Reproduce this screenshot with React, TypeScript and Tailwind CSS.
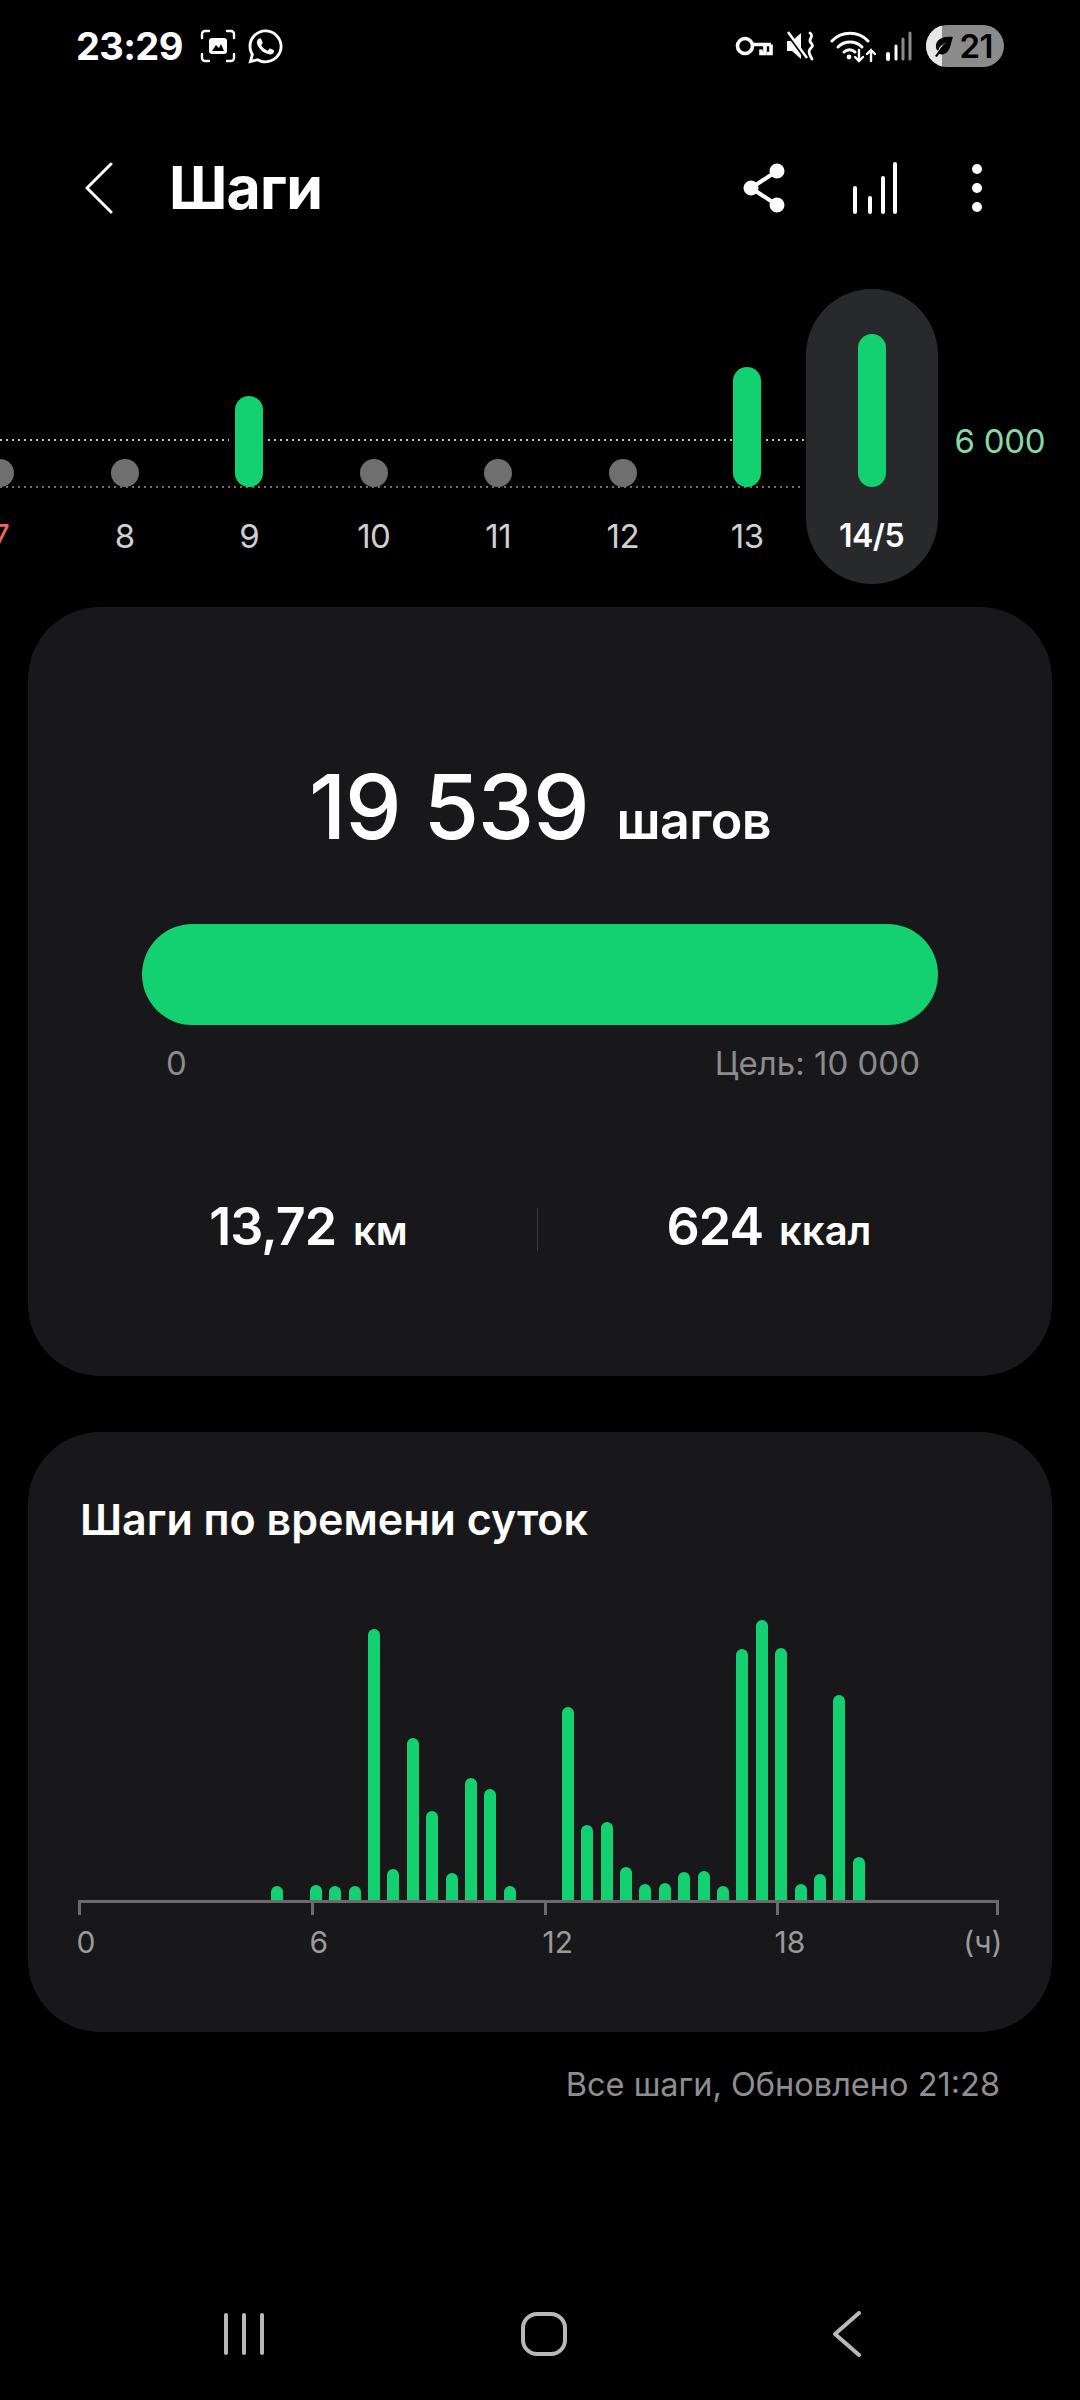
import { FaWhatsapp } from 'react-icons/fa';

// steps per half hour slot, height in px (slot index from first bar at ~5:00)
const hourly = [14, 0, 15, 14, 14, 271, 31, 162, 89, 27, 122, 111, 14, 0, 0, 193, 75, 78, 33, 16, 17, 28, 29, 14, 251, 280, 252, 16, 26, 205, 43];

const days = [
  { label: '7', h: 28, red: true },
  { label: '8', h: 28 },
  { label: '9', h: 91 },
  { label: '10', h: 28 },
  { label: '11', h: 28 },
  { label: '12', h: 28 },
  { label: '13', h: 120 },
];

const axis = [
  { label: '0', w: 'w-[233px]' },
  { label: '6', w: 'w-[233px]' },
  { label: '12', w: 'w-[232px]' },
  { label: '18', w: 'w-[223px]' },
];

function StatusBar() {
  return (
    <div className="h-[92px] pl-[76px] pr-[76px] pt-[25px] flex items-start justify-between text-white">
      <div className="flex items-center h-[42px]">
        <span className="text-[38px] leading-[42px] font-bold tracking-[-0.6px]">23:29</span>
        <svg className="ml-[17px]" width="36" height="34" viewBox="0 0 36 34" fill="none" stroke="white" strokeWidth="2.4" strokeLinecap="round">
          <path d="M2 9V5a3 3 0 0 1 3-3h4M27 2h4a3 3 0 0 1 3 3v4M34 25v4a3 3 0 0 1-3 3h-4M9 32H5a3 3 0 0 1-3-3v-4" />
          <rect x="9" y="9" width="18" height="16" rx="3" fill="white" stroke="none" />
          <path d="M12 22l4-6 3 3 2-4 3 7z" fill="black" stroke="none" />
        </svg>
        <FaWhatsapp className="ml-[10px]" size={39} color="white" />
      </div>
      <div className="flex items-center h-[42px]">
        <svg width="38" height="22" viewBox="0 0 38 22" fill="none" stroke="white" strokeWidth="3.6">
          <circle cx="10" cy="11" r="7.5" />
          <path d="M17 9.5h19M30 9.5v9h-4v-4M36 9.5v9h-4" strokeLinejoin="miter" />
        </svg>
        <svg className="ml-[13px]" width="31" height="30" viewBox="0 0 31 30" fill="none">
          <path d="M1 10h5l9-8v26l-9-8H1z" fill="white" />
          <path d="M1 2l19 26" stroke="black" strokeWidth="3" />
          <path d="M2 1l19 26" stroke="white" strokeWidth="2.5" />
          <path d="M24 2c5 4-3 6 1 10 3 3 1 4-1 6s-1 5 2 10" stroke="white" strokeWidth="2.8" strokeLinecap="round" />
        </svg>
        <svg className="ml-[13px]" width="46" height="33" viewBox="0 0 46 33" fill="none" stroke="white" strokeLinecap="round">
          <path d="M2 11a25 25 0 0 1 36 0" strokeWidth="3" />
          <path d="M8 17a17 17 0 0 1 24 0" strokeWidth="3" />
          <path d="M14 22a8 8 0 0 1 11 0" strokeWidth="3" />
          <circle cx="19" cy="27" r="2.4" fill="white" stroke="none" />
          <path d="M29 20v11M25 27l4 4 4-4" strokeWidth="2.4" />
          <path d="M41 31V20M37 24l4-4 4 4" strokeWidth="2.4" />
        </svg>
        <svg className="ml-[9px]" width="28" height="30" viewBox="0 0 28 30" fill="none" strokeLinecap="round">
          <path d="M3 23v5" stroke="white" strokeWidth="4" />
          <path d="M11 15v13" stroke="white" strokeWidth="3" />
          <path d="M18 8v20" stroke="#8a8a8a" strokeWidth="3" />
          <path d="M25 2v26" stroke="#8a8a8a" strokeWidth="3" />
        </svg>
        <div className="ml-[13px] relative w-[78px] h-[42px] rounded-full overflow-hidden bg-[#8b8b8b] flex items-center justify-end pr-[11px]">
          <div className="absolute left-0 top-0 bottom-0 w-[16px] bg-[#e6e6e6]" />
          <svg className="absolute left-[6px] top-[11px]" width="22" height="21" viewBox="0 0 22 21" fill="black">
            <path d="M21 1C11 0 5 3 4 9c-.5 3 .5 5 2 6 1-4 4-7 9-9-4 3-7 6-9 10l-3 4 2 1 2-3c3 1 7 0 9-3 3-4 3-9 5-14z" />
          </svg>
          <span className="relative text-[33px] leading-none font-semibold text-black tracking-[-0.5px]">21</span>
        </div>
      </div>
    </div>
  );
}

function Header() {
  return (
    <div className="h-[52px] mt-[70px] flex items-center pl-[84px] pr-[97px] text-white">
      <svg width="30" height="52" viewBox="0 0 30 52" fill="none" stroke="white" strokeWidth="3" strokeLinecap="round" strokeLinejoin="round">
        <path d="M27 2L3 26l24 24" />
      </svg>
      <h1 className="ml-[55px] text-[59px] leading-[52px] font-bold tracking-[-0.8px]">Шаги</h1>
      <div className="ml-auto flex items-center">
        <svg className="mr-[5px]" width="44" height="50" viewBox="0 0 44 50" fill="white" stroke="white" strokeWidth="3">
          <circle cx="34" cy="8" r="6" />
          <circle cx="8" cy="25" r="6" />
          <circle cx="34" cy="42" r="6" />
          <path d="M34 8L8 25l26 17" fill="none" strokeWidth="4" />
        </svg>
        <svg className="ml-[60px]" width="46" height="52" viewBox="0 0 46 52" fill="none" stroke="white" strokeWidth="4" strokeLinecap="round">
          <path d="M3 26v24M18 36v14M31 16v34M43 2v48" />
        </svg>
        <div className="ml-[73px] h-[48px] w-[12px] flex flex-col items-center justify-between">
          <div className="w-[10px] h-[10px] rounded-full bg-white" />
          <div className="w-[10px] h-[10px] rounded-full bg-white" />
          <div className="w-[10px] h-[10px] rounded-full bg-white" />
        </div>
      </div>
    </div>
  );
}

function Timeline() {
  return (
    <div className="relative mt-[75px] h-[295px] overflow-hidden flex items-stretch">
      {/* goal line stops short of the taller bars */}
      <div className="absolute left-0 top-[150px] w-[804px] h-[2px] flex">
        <div className="w-[229px] bg-[repeating-linear-gradient(90deg,#8fe3ae_0_2px,transparent_2px_6px)]" />
        <div className="ml-[39px] w-[465px] bg-[repeating-linear-gradient(90deg,#8fe3ae_0_2px,transparent_2px_6px)]" />
        <div className="ml-[33px] flex-1 bg-[repeating-linear-gradient(90deg,#8fe3ae_0_2px,transparent_2px_6px)]" />
      </div>
      <div className="absolute left-0 top-[197px] w-[804px] h-[2px] bg-[repeating-linear-gradient(90deg,#707070_0_2px,transparent_2px_6px)]" />
      <div className="flex -ml-[62px]">
        {days.map((d) => (
          <div key={d.label} className="relative w-[124.5px] flex flex-col items-center">
            <div className="h-[198px] flex items-end">
              <div
                className={`w-[28px] rounded-full ${d.h > 28 ? 'bg-[#13d170]' : 'bg-[#6f6f6f]'}`}
                style={{ height: d.h }}
              />
            </div>
            <span className={`mt-[29px] text-[33px] leading-[40px] tracking-[-0.5px] ${d.red ? 'text-[#f0665c]' : 'text-[#cfcfcf]'}`}>{d.label}</span>
          </div>
        ))}
        <div className="relative w-[132px] -ml-[4px] rounded-full bg-[#28292b] flex flex-col items-center">
          <div className="h-[198px] flex items-end">
            <div className="w-[28px] h-[153px] rounded-full bg-[#13d170]" />
          </div>
          <span className="mt-[29px] text-[32px] leading-[40px] font-semibold text-white tracking-[-0.5px]">14/5</span>
        </div>
      </div>
      <span className="ml-[17px] mt-[132px] text-[33px] leading-[40px] tracking-[-0.3px] text-[#86dba4]">6 000</span>
    </div>
  );
}

function SummaryCard() {
  return (
    <div className="mx-[28px] mt-[23px] h-[769px] rounded-[72px] bg-[#18181a] text-white flex flex-col">
      <div className="mt-[165px] flex items-baseline justify-center h-[70px]">
        <span className="text-[90px] leading-[70px] font-medium tracking-[-1.2px]">19 539</span>
        <span className="ml-[28px] text-[52px] leading-[70px] font-semibold tracking-[-0.6px]">шагов</span>
      </div>
      <div className="mx-[114px] mt-[82px] h-[101px] rounded-full bg-[#13d170]" />
      <div className="mx-[138px] mt-[18px] flex justify-between text-[33px] leading-[40px] text-[#8b8b8e]">
        <span>0</span>
        <span className="mr-[-6px]">Цель: 10 000</span>
      </div>
      <div className="mt-[114px] flex items-center">
        <div className="w-[509px] flex items-baseline justify-center pl-[52px]">
          <span className="text-[52px] leading-[60px] font-semibold tracking-[-1px]">13,72</span>
          <span className="ml-[17px] text-[40px] leading-[60px] font-semibold">км</span>
        </div>
        <div className="w-[1px] h-[43px] bg-[#3a3a3c]" />
        <div className="flex-1 flex items-baseline justify-center pr-[52px]">
          <span className="text-[52px] leading-[60px] font-semibold tracking-[-1px]">624</span>
          <span className="ml-[16px] text-[40px] leading-[60px] font-semibold">ккал</span>
        </div>
      </div>
    </div>
  );
}

function ChartCard() {
  return (
    <div className="mx-[28px] mt-[56px] h-[600px] rounded-[72px] bg-[#18181a] text-white flex flex-col">
      <h2 className="ml-[52px] mt-[59px] text-[43px] leading-[56px] font-semibold">Шаги по времени суток</h2>
      <div className="ml-[50px] mt-[73px] w-[921px]">
        <div className="h-[280px] pl-[189.3px] flex items-end">
          {hourly.map((h, i) => (
            <div key={i} className="w-[19.4px] flex justify-center">
              <div className="w-[12px] rounded-t-full bg-[#13d170]" style={{ height: h }} />
            </div>
          ))}
        </div>
        <div className="border-t-[3px] border-[#6b6b6b] flex">
          {axis.map((a, i) => (
            <div key={a.label} className={`${a.w} h-[12px] border-l-[3px] border-[#6b6b6b] ${i === 3 ? 'border-r-[3px]' : ''}`} />
          ))}
        </div>
        <div className="mt-[7px] -ml-[1.5px] flex text-[30px] leading-[40px] text-[#9a9a9a]">
          {axis.map((a, i) => (
            <span key={a.label} className={`${a.w} flex ${i === 3 ? 'justify-between' : ''}`}>
              {a.label}
              {i === 3 ? <span className="mr-[-5px]">(ч)</span> : null}
            </span>
          ))}
        </div>
      </div>
    </div>
  );
}

function NavBar() {
  return (
    <div className="mt-auto mb-[44px] h-[44px] flex items-center pl-[224px]">
      <div className="flex gap-[14px]">
        <div className="w-[4px] h-[42px] rounded-full bg-[#b8b8b8]" />
        <div className="w-[4px] h-[42px] rounded-full bg-[#b8b8b8]" />
        <div className="w-[4px] h-[42px] rounded-full bg-[#b8b8b8]" />
      </div>
      <div className="ml-[257px] w-[46px] h-[44px] rounded-[16px] border-[4px] border-[#b8b8b8]" />
      <svg className="ml-[265px]" width="30" height="46" viewBox="0 0 30 46" fill="none" stroke="#b8b8b8" strokeWidth="4" strokeLinecap="round" strokeLinejoin="round">
        <path d="M27 2L3 23l24 21" />
      </svg>
    </div>
  );
}

export default function App() {
  return (
    <div className="w-[1080px] h-[2400px] bg-black overflow-hidden flex flex-col font-['Inter',sans-serif]">
      <StatusBar />
      <Header />
      <Timeline />
      <SummaryCard />
      <ChartCard />
      <p className="mt-[33px] pr-[80px] text-right text-[32.5px] leading-[40px] text-[#8e8e90]">Все шаги, Обновлено 21:28</p>
      <NavBar />
    </div>
  );
}
